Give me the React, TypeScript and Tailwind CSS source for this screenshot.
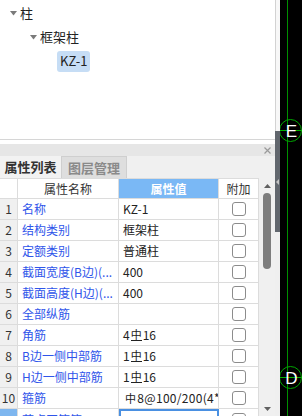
import React from "react";

const font = { fontFamily: '"Noto Sans CJK SC", "Noto Sans", sans-serif' };

type Row = { no: string; name: string; value: React.ReactNode };

function Bar({ n }: { n: string }) {
  // steel grade glyph: 中 with a bar under it
  return (
    <span className="inline-flex items-center">
      {n}
      <span className="inline-block text-[11px] leading-[11px] border-b border-[#222] mx-[1px]">中</span>
      16
    </span>
  );
}

const rows: Row[] = [
  { no: "1", name: "名称", value: "KZ-1" },
  { no: "2", name: "结构类别", value: "框架柱" },
  { no: "3", name: "定额类别", value: "普通柱" },
  { no: "4", name: "截面宽度(B边)(...", value: "400" },
  { no: "5", name: "截面高度(H边)(...", value: "400" },
  { no: "6", name: "全部纵筋", value: "" },
  { no: "7", name: "角筋", value: <Bar n="4" /> },
  { no: "8", name: "B边一侧中部筋", value: <Bar n="1" /> },
  { no: "9", name: "H边一侧中部筋", value: <Bar n="1" /> },
  {
    no: "10",
    name: "箍筋",
    value: (
      <span className="pl-[2px] tracking-[0.3px]">
        <span className="text-[11px] mr-[1px]">中</span>8@100/200(4*4)
      </span>
    ),
  },
];

function Caret() {
  return (
    <svg width="7" height="5" viewBox="0 0 7 5" className="shrink-0">
      <polygon points="0,0 7,0 3.5,4.5" fill="#7a7a7a" />
    </svg>
  );
}

function Check() {
  return <div className="w-[14px] h-[14px] rounded-[3px] border border-[#8c8c8c] bg-white" />;
}

export default function App() {
  return (
    <div className="w-[302px] h-[416px] flex overflow-hidden bg-white text-[#222]" style={font}>
      {/* left dock */}
      <div className="w-[275px] flex flex-col shrink-0">
        {/* tree */}
        <div className="h-[139px] shrink-0 bg-white pt-[1px] text-[13px]">
          <div className="h-[24px] flex items-center pl-[10px] gap-[3px]">
            <Caret />
            <span>柱</span>
          </div>
          <div className="h-[24px] flex items-center pl-[30px] gap-[3px]">
            <Caret />
            <span>框架柱</span>
          </div>
          <div className="h-[24px] flex items-center pl-[57px]">
            <span className="h-[21px] px-[3px] flex items-center rounded-[3px] bg-[#c6ddf5]">KZ-1</span>
          </div>
        </div>
        <div className="h-px bg-[#d6d6d6] shrink-0" />
        <div className="h-[4px] bg-white shrink-0" />
        {/* panel title */}
        <div className="h-[12px] bg-[#e6e6e6] shrink-0 flex items-center justify-end pr-[4px]">
          <svg width="7" height="7" viewBox="0 0 7 7">
            <path d="M0.5 0.5L6.5 6.5M6.5 0.5L0.5 6.5" stroke="#9a9a9a" strokeWidth="1.2" />
          </svg>
        </div>
        {/* tabs */}
        <div className="h-[22px] bg-[#f0f0f0] shrink-0 flex text-[13px]">
          <div className="w-[62px] flex items-center justify-center font-bold text-[#333] border-r border-[#cfcfcf] bg-[#f2f2f2]">
            属性列表
          </div>
          <div className="w-[65px] flex items-center justify-center font-bold text-[#8a8a8a] bg-[#dedede] border-r border-t border-[#cfcfcf]">
            图层管理
          </div>
        </div>
        {/* grid */}
        <div className="flex flex-1 min-h-0">
          <div className="w-[259px] text-[12px]">
            <div className="grid grid-cols-[18px_101px_100px_40px] h-[21px] border-t border-[#dcdcdc]">
              <div className="border-r border-b border-[#dcdcdc] bg-white" />
              <div className="border-r border-b border-[#dcdcdc] flex items-center justify-center text-[#333]">属性名称</div>
              <div className="border-r border-b border-[#dcdcdc] flex items-center justify-center bg-[#7ab8f5] text-white font-bold">属性值</div>
              <div className="border-r border-b border-[#dcdcdc] flex items-center justify-center text-[#333]">附加</div>
            </div>
            {rows.map((r) => (
              <div key={r.no} className="grid grid-cols-[18px_101px_100px_40px] h-[21px]">
                <div className="border-r border-b border-[#dcdcdc] bg-[#f0f0f0] flex items-center justify-center text-[#333]">{r.no}</div>
                <div className="border-r border-b border-[#dcdcdc] flex items-center pl-[4px] text-[#2f55ea] whitespace-nowrap overflow-hidden">{r.name}</div>
                <div className="border-r border-b border-[#dcdcdc] flex items-center pl-[4px] whitespace-nowrap overflow-hidden">{r.value}</div>
                <div className="border-r border-b border-[#dcdcdc] flex items-center justify-center"><Check /></div>
              </div>
            ))}
            <div className="grid grid-cols-[18px_101px_100px_40px] h-[21px]">
              <div className="border-r border-[#dcdcdc] bg-[#7eb6ef] flex items-center justify-center text-white">11</div>
              <div className="border-r border-[#dcdcdc] flex items-center pl-[4px] text-[#2f55ea] whitespace-nowrap">节点区箍筋</div>
              <div className="border-2 border-[#4a90e2]" />
              <div className="border-r border-[#dcdcdc] flex items-center justify-center"><Check /></div>
            </div>
          </div>
          {/* scrollbar */}
          <div className="w-[16px] bg-[#f0f0f0] flex flex-col items-center pt-[6px]">
            <svg width="7" height="4" viewBox="0 0 7 4">
              <polygon points="0,4 7,4 3.5,0" fill="#606060" />
            </svg>
            <div className="w-[8px] h-[76px] mt-[5px] rounded-full bg-[#7d7d7d]" />
            <div className="flex-1" />
            <svg width="7" height="4" viewBox="0 0 7 4" className="mb-[5px]">
              <polygon points="0,0 7,0 3.5,4" fill="#606060" />
            </svg>
          </div>
        </div>
      </div>
      {/* splitter */}
      <div className="w-[5px] shrink-0 flex flex-col">
        <div className="h-[131px] flex">
          <div className="w-px bg-[#d2d2d2]" />
          <div className="flex-1 bg-[#f7f7f7]" />
        </div>
        <div className="h-[101px] bg-[#62676e] flex items-center justify-center">
          <svg width="3" height="6" viewBox="0 0 3 6">
            <polygon points="3,0 3,6 0,3" fill="#c4c4c4" />
          </svg>
        </div>
        <div className="flex-1 bg-[#efefef]" />
      </div>
      {/* drawing canvas */}
      <div className="flex-1 bg-black">
        <svg width="22" height="416" viewBox="280 0 22 416">
          <line x1="287.5" y1="0" x2="287.5" y2="416" stroke="#009000" strokeWidth="1" />
          <line x1="280" y1="130.5" x2="302" y2="130.5" stroke="#00b000" strokeWidth="1" />
          <circle cx="290.5" cy="130.5" r="11" fill="none" stroke="#00a800" strokeWidth="1" />
          <text x="291.5" y="137" textAnchor="middle" fill="#fff" fontSize="17" fontFamily="Liberation Sans, sans-serif">E</text>
          <line x1="280" y1="377.5" x2="302" y2="377.5" stroke="#00b000" strokeWidth="1" />
          <circle cx="290.5" cy="377.5" r="11" fill="none" stroke="#00a800" strokeWidth="1" />
          <text x="291.5" y="384" textAnchor="middle" fill="#fff" fontSize="17" fontFamily="Liberation Sans, sans-serif">D</text>
        </svg>
      </div>
    </div>
  );
}
